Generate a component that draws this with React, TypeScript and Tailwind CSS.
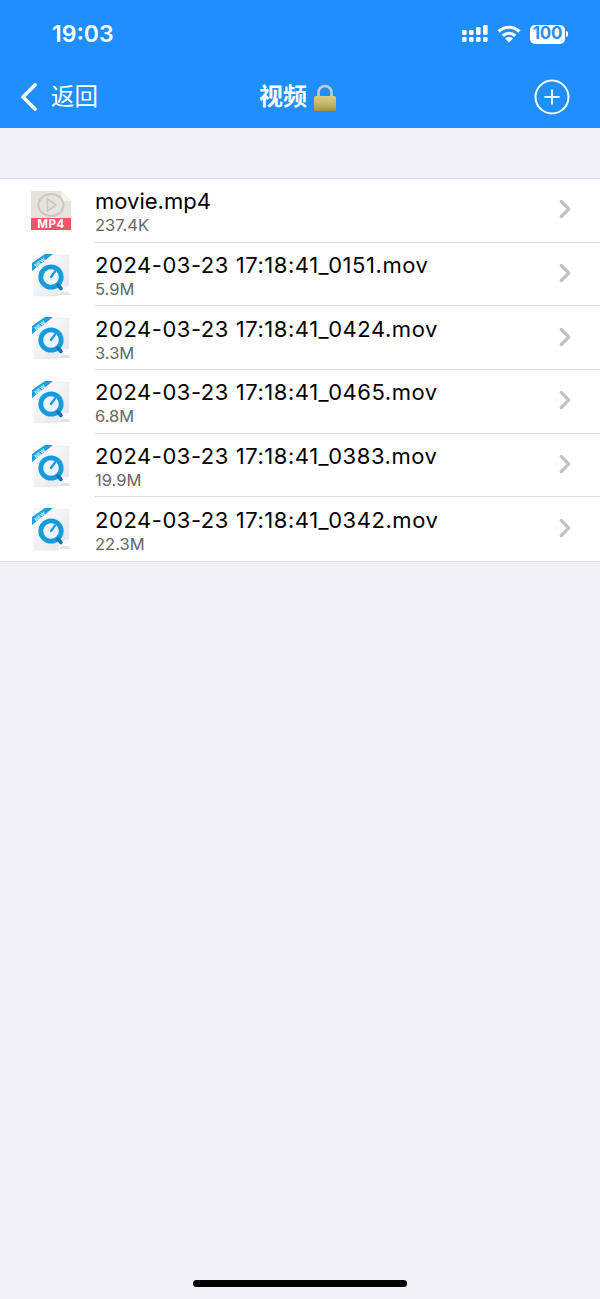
import { ChevronRight } from "lucide-react";

const files = [
  { name: "movie.mp4", size: "237.4K", kind: "mp4" },
  { name: "2024-03-23 17:18:41_0151.mov", size: "5.9M", kind: "mov" },
  { name: "2024-03-23 17:18:41_0424.mov", size: "3.3M", kind: "mov" },
  { name: "2024-03-23 17:18:41_0465.mov", size: "6.8M", kind: "mov" },
  { name: "2024-03-23 17:18:41_0383.mov", size: "19.9M", kind: "mov" },
  { name: "2024-03-23 17:18:41_0342.mov", size: "22.3M", kind: "mov" },
];

function Mp4Icon() {
  return (
    <div className="relative h-[42px] w-[40px]">
      <svg viewBox="0 0 40 42" className="h-[42px] w-[40px]">
        <path d="M0 0H30L40 10V28H0Z" fill="#e6e3dd" />
        <path d="M30 0L40 10H31.5Q30 10 30 8.5Z" fill="#f5f4f1" />
        <rect x="0" y="27" width="40" height="12" fill="#f7546a" />
        <ellipse cx="20" cy="14" rx="12.5" ry="11" fill="none" stroke="#cbc8c2" strokeWidth="2" />
        <path d="M16.5 8L25 14L16.5 20Z" fill="none" stroke="#cbc8c2" strokeWidth="1.6" strokeLinejoin="round" />
      </svg>
      <span className="absolute top-[27px] left-0 w-[40px] text-center text-[11.5px] leading-[12px] font-bold tracking-[0.6px] text-white">
        MP4
      </span>
    </div>
  );
}

function MovIcon() {
  return (
    <svg viewBox="0 0 42 44" className="h-[44px] w-[42px]">
      <defs>
        <linearGradient id="movPage" x1="0" y1="0" x2="1" y2="1">
          <stop offset="0" stopColor="#ffffff" />
          <stop offset="1" stopColor="#e2e4e8" />
        </linearGradient>
      </defs>
      <path d="M4 41H40L37 38H4Z" fill="#cfcfcf" opacity="0.6" />
      <path d="M3 1H38V31L27 42H3Z" fill="url(#movPage)" stroke="#e6e9ee" strokeWidth="0.5" />
      <path d="M27 42L29 33L38 31Z" fill="#f7f8fa" />
      <path d="M1 9L14 0H22L1 17Z" fill="#1c9fd8" />
      <text x="5" y="13.5" fontSize="5" fontWeight="700" fill="#dff3fb" transform="rotate(-38 5 13.5)">NEW</text>
      <circle cx="20" cy="23" r="10.2" fill="#eef5fa" stroke="#169bdb" strokeWidth="4.8" />
      <path d="M20 23L24 17.5" stroke="#169bdb" strokeWidth="2.2" strokeLinecap="round" />
      <path d="M27 31L30 34.5" stroke="#1676b8" strokeWidth="3.6" strokeLinecap="round" />
    </svg>
  );
}

function FileRow({ name, size, kind, last }: { name: string; size: string; kind: string; last: boolean }) {
  return (
    <div className="flex h-[63.7px] items-start">
      <div className={`w-[95px] shrink-0 pl-[31px] ${kind === "mov" ? "pt-[11px]" : "pt-[12px]"}`}>
        {kind === "mp4" ? <Mp4Icon /> : <MovIcon />}
      </div>
      <div className={`flex h-[63.7px] flex-1 items-center justify-between pr-[20px] ${last ? "" : "border-b border-[#dedee0]"}`}>
        <div className="pt-[3px]">
          <div className={`text-[22px] leading-[27px] text-black ${kind === "mov" ? "tracking-[0.54px]" : ""}`}>{name}</div>
          <div className="text-[16.5px] leading-[20px] text-[#666666]">{size}</div>
        </div>
        <ChevronRight size={30} strokeWidth={2.6} className="mb-[2px] text-[#c2c2c4]" />
      </div>
    </div>
  );
}

export default function App() {
  return (
    <div className="flex h-[1299px] w-[600px] flex-col overflow-hidden bg-[#f1f1f7] font-['Inter','Noto_Sans_CJK_SC',sans-serif]">
      <header className="h-[128px] shrink-0 bg-[#1f8fff] text-white">
        <div className="flex h-[66px] items-center justify-between pt-[2px] pr-[32px] pl-[52px]">
          <span className="text-[23px] font-semibold">19:03</span>
          <div className="flex items-center gap-[9px]">
            <svg viewBox="0 0 26 18" className="h-[18px] w-[26px]" fill="#fff">
              <rect x="0" y="5" width="4.6" height="5" rx="1.4" />
              <rect x="0" y="12" width="4.6" height="5" rx="1.4" />
              <rect x="7" y="5" width="4.6" height="5" rx="1.4" />
              <rect x="7" y="12" width="4.6" height="5" rx="1.4" />
              <rect x="14" y="2" width="4.6" height="8" rx="1.4" />
              <rect x="14" y="12" width="4.6" height="5" rx="1.4" />
              <rect x="21" y="0" width="4.6" height="10" rx="1.4" />
              <rect x="21" y="12" width="4.6" height="5" rx="1.4" />
            </svg>
            <svg viewBox="0 0 24 18" className="h-[18px] w-[24px]" fill="none" stroke="#fff" strokeWidth="3.2">
              <path d="M1.5 6.5C7.5 0.8 16.5 0.8 22.5 6.5" />
              <path d="M5.8 10.8C9.5 7.4 14.5 7.4 18.2 10.8" />
              <path d="M12 17.5L8 13.5C10.5 11.6 13.5 11.6 16 13.5Z" fill="#fff" stroke="none" />
            </svg>
            <div className="flex items-center gap-[1px]">
              <div className="flex h-[19px] w-[35px] items-center justify-center rounded-[5px] bg-white text-[17px] font-bold tracking-[-0.3px] text-[#1f8fff]">
                100
              </div>
              <div className="h-[6px] w-[2px] rounded-r-full bg-white" />
            </div>
          </div>
        </div>
        <div className="relative flex h-[62px] items-center justify-between pr-[30px] pl-[20px]">
          <div className="flex items-center gap-[13px]">
            <svg viewBox="0 0 18 28" className="h-[28px] w-[18px]" fill="none" stroke="#fff" strokeWidth="3.6" strokeLinecap="round" strokeLinejoin="round">
              <path d="M15 2L3 14L15 26" />
            </svg>
            <span className="text-[23.5px]">返回</span>
          </div>
          <div className="absolute left-[259px] flex items-center">
            <span className="text-[24px] font-semibold">视频</span>
            <svg viewBox="0 0 24 28" className="mt-[1px] ml-[6px] h-[28px] w-[24px]">
              <defs>
                <linearGradient id="lockBody" x1="0" y1="0" x2="0" y2="1">
                  <stop offset="0" stopColor="#d9cc85" />
                  <stop offset="0.6" stopColor="#c2b268" />
                  <stop offset="1" stopColor="#9c8f50" />
                </linearGradient>
              </defs>
              <path d="M5.5 13V8.5A6.5 6.5 0 0 1 18.5 8.5V13" fill="none" stroke="#c4ccd4" strokeWidth="2.6" />
              <rect x="1" y="12" width="22" height="15" rx="1.5" fill="url(#lockBody)" />
            </svg>
          </div>
          <svg viewBox="0 0 36 36" className="h-[36px] w-[36px]" fill="none" stroke="#fff" strokeWidth="2">
            <circle cx="18" cy="18" r="16.5" />
            <path d="M18 10.5V25.5M10.5 18H25.5" />
          </svg>
        </div>
      </header>
      <div className="mt-[50px] border-y border-[#dedee0] bg-white">
        {files.map((f, i) => (
          <FileRow key={f.name} {...f} last={i === files.length - 1} />
        ))}
      </div>
      <div className="mt-auto flex justify-center pb-[12px]">
        <div className="h-[7px] w-[214px] rounded-full bg-black" />
      </div>
    </div>
  );
}
